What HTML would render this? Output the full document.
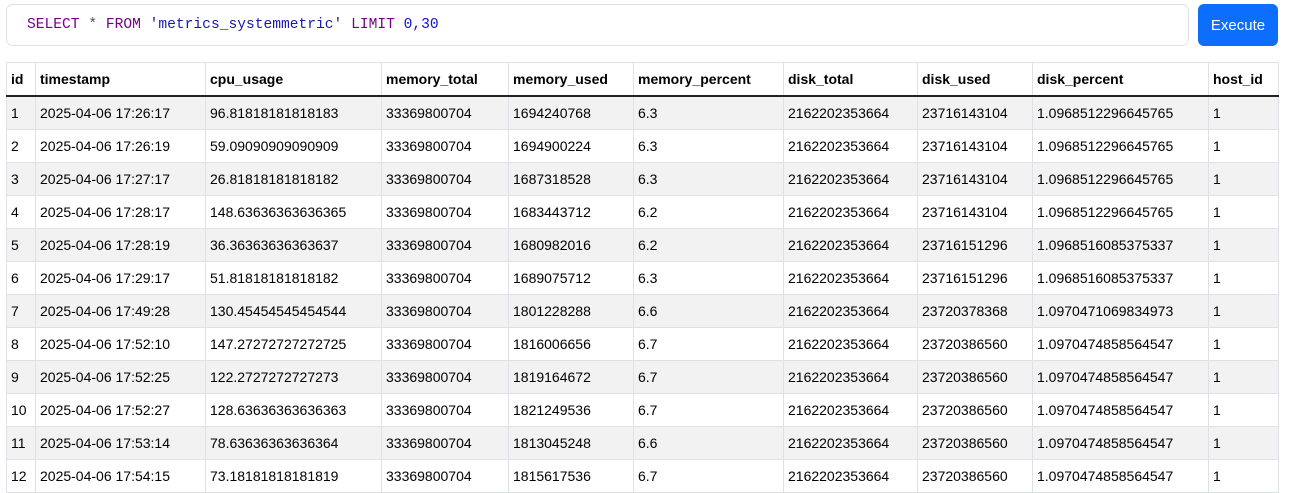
<!DOCTYPE html>
<html><head><style>
body{margin:0;background:#fff;font-family:"Liberation Sans",sans-serif;color:#212529;}
.ed{position:absolute;left:6px;top:4px;width:1181px;height:40px;border:1px solid #dee2e6;border-radius:7px;}
.code{position:absolute;left:20px;top:12px;font:14.6px "Liberation Mono",monospace;white-space:pre;}
.k{color:#770088}.s{color:#1a1aa6}.n{color:#1111cc}.o{color:#555}
.btn{position:absolute;left:1198px;top:4px;width:80px;height:42px;background:#0d6efd;border-radius:6px;color:#fff;font-size:15px;line-height:44px;text-align:center;}
table{position:absolute;left:6px;top:62px;border-collapse:collapse;table-layout:fixed;width:1272px;font-size:14px;}
td,th{border:1px solid #dee2e6;padding:0 4px;text-align:left;white-space:nowrap;overflow:hidden;height:32px;color:#000;}
th{height:32px;border-bottom:2px solid #222;font-weight:bold;}
tr:nth-child(odd) td{background:#f2f2f2;}
</style></head><body>
<div class="ed"><div class="code"><span class="k">SELECT</span> <span class="o">*</span> <span class="k">FROM</span> <span class="s">'metrics_systemmetric'</span> <span class="k">LIMIT</span> <span class="n">0,30</span></div></div>
<div class="btn">Execute</div>
<table>
<colgroup><col style="width:29px"><col style="width:170px"><col style="width:176px"><col style="width:127px"><col style="width:125px"><col style="width:150px"><col style="width:134px"><col style="width:115px"><col style="width:176px"><col style="width:70px"></colgroup>
<thead><tr><th>id</th><th>timestamp</th><th>cpu_usage</th><th>memory_total</th><th>memory_used</th><th>memory_percent</th><th>disk_total</th><th>disk_used</th><th>disk_percent</th><th>host_id</th></tr></thead>
<tbody>
<tr><td>1</td><td>2025-04-06 17:26:17</td><td>96.81818181818183</td><td>33369800704</td><td>1694240768</td><td>6.3</td><td>2162202353664</td><td>23716143104</td><td>1.0968512296645765</td><td>1</td></tr>
<tr><td>2</td><td>2025-04-06 17:26:19</td><td>59.09090909090909</td><td>33369800704</td><td>1694900224</td><td>6.3</td><td>2162202353664</td><td>23716143104</td><td>1.0968512296645765</td><td>1</td></tr>
<tr><td>3</td><td>2025-04-06 17:27:17</td><td>26.81818181818182</td><td>33369800704</td><td>1687318528</td><td>6.3</td><td>2162202353664</td><td>23716143104</td><td>1.0968512296645765</td><td>1</td></tr>
<tr><td>4</td><td>2025-04-06 17:28:17</td><td>148.63636363636365</td><td>33369800704</td><td>1683443712</td><td>6.2</td><td>2162202353664</td><td>23716143104</td><td>1.0968512296645765</td><td>1</td></tr>
<tr><td>5</td><td>2025-04-06 17:28:19</td><td>36.36363636363637</td><td>33369800704</td><td>1680982016</td><td>6.2</td><td>2162202353664</td><td>23716151296</td><td>1.0968516085375337</td><td>1</td></tr>
<tr><td>6</td><td>2025-04-06 17:29:17</td><td>51.81818181818182</td><td>33369800704</td><td>1689075712</td><td>6.3</td><td>2162202353664</td><td>23716151296</td><td>1.0968516085375337</td><td>1</td></tr>
<tr><td>7</td><td>2025-04-06 17:49:28</td><td>130.45454545454544</td><td>33369800704</td><td>1801228288</td><td>6.6</td><td>2162202353664</td><td>23720378368</td><td>1.0970471069834973</td><td>1</td></tr>
<tr><td>8</td><td>2025-04-06 17:52:10</td><td>147.27272727272725</td><td>33369800704</td><td>1816006656</td><td>6.7</td><td>2162202353664</td><td>23720386560</td><td>1.0970474858564547</td><td>1</td></tr>
<tr><td>9</td><td>2025-04-06 17:52:25</td><td>122.2727272727273</td><td>33369800704</td><td>1819164672</td><td>6.7</td><td>2162202353664</td><td>23720386560</td><td>1.0970474858564547</td><td>1</td></tr>
<tr><td>10</td><td>2025-04-06 17:52:27</td><td>128.63636363636363</td><td>33369800704</td><td>1821249536</td><td>6.7</td><td>2162202353664</td><td>23720386560</td><td>1.0970474858564547</td><td>1</td></tr>
<tr><td>11</td><td>2025-04-06 17:53:14</td><td>78.63636363636364</td><td>33369800704</td><td>1813045248</td><td>6.6</td><td>2162202353664</td><td>23720386560</td><td>1.0970474858564547</td><td>1</td></tr>
<tr><td>12</td><td>2025-04-06 17:54:15</td><td>73.18181818181819</td><td>33369800704</td><td>1815617536</td><td>6.7</td><td>2162202353664</td><td>23720386560</td><td>1.0970474858564547</td><td>1</td></tr>
</tbody></table>
</body></html>
